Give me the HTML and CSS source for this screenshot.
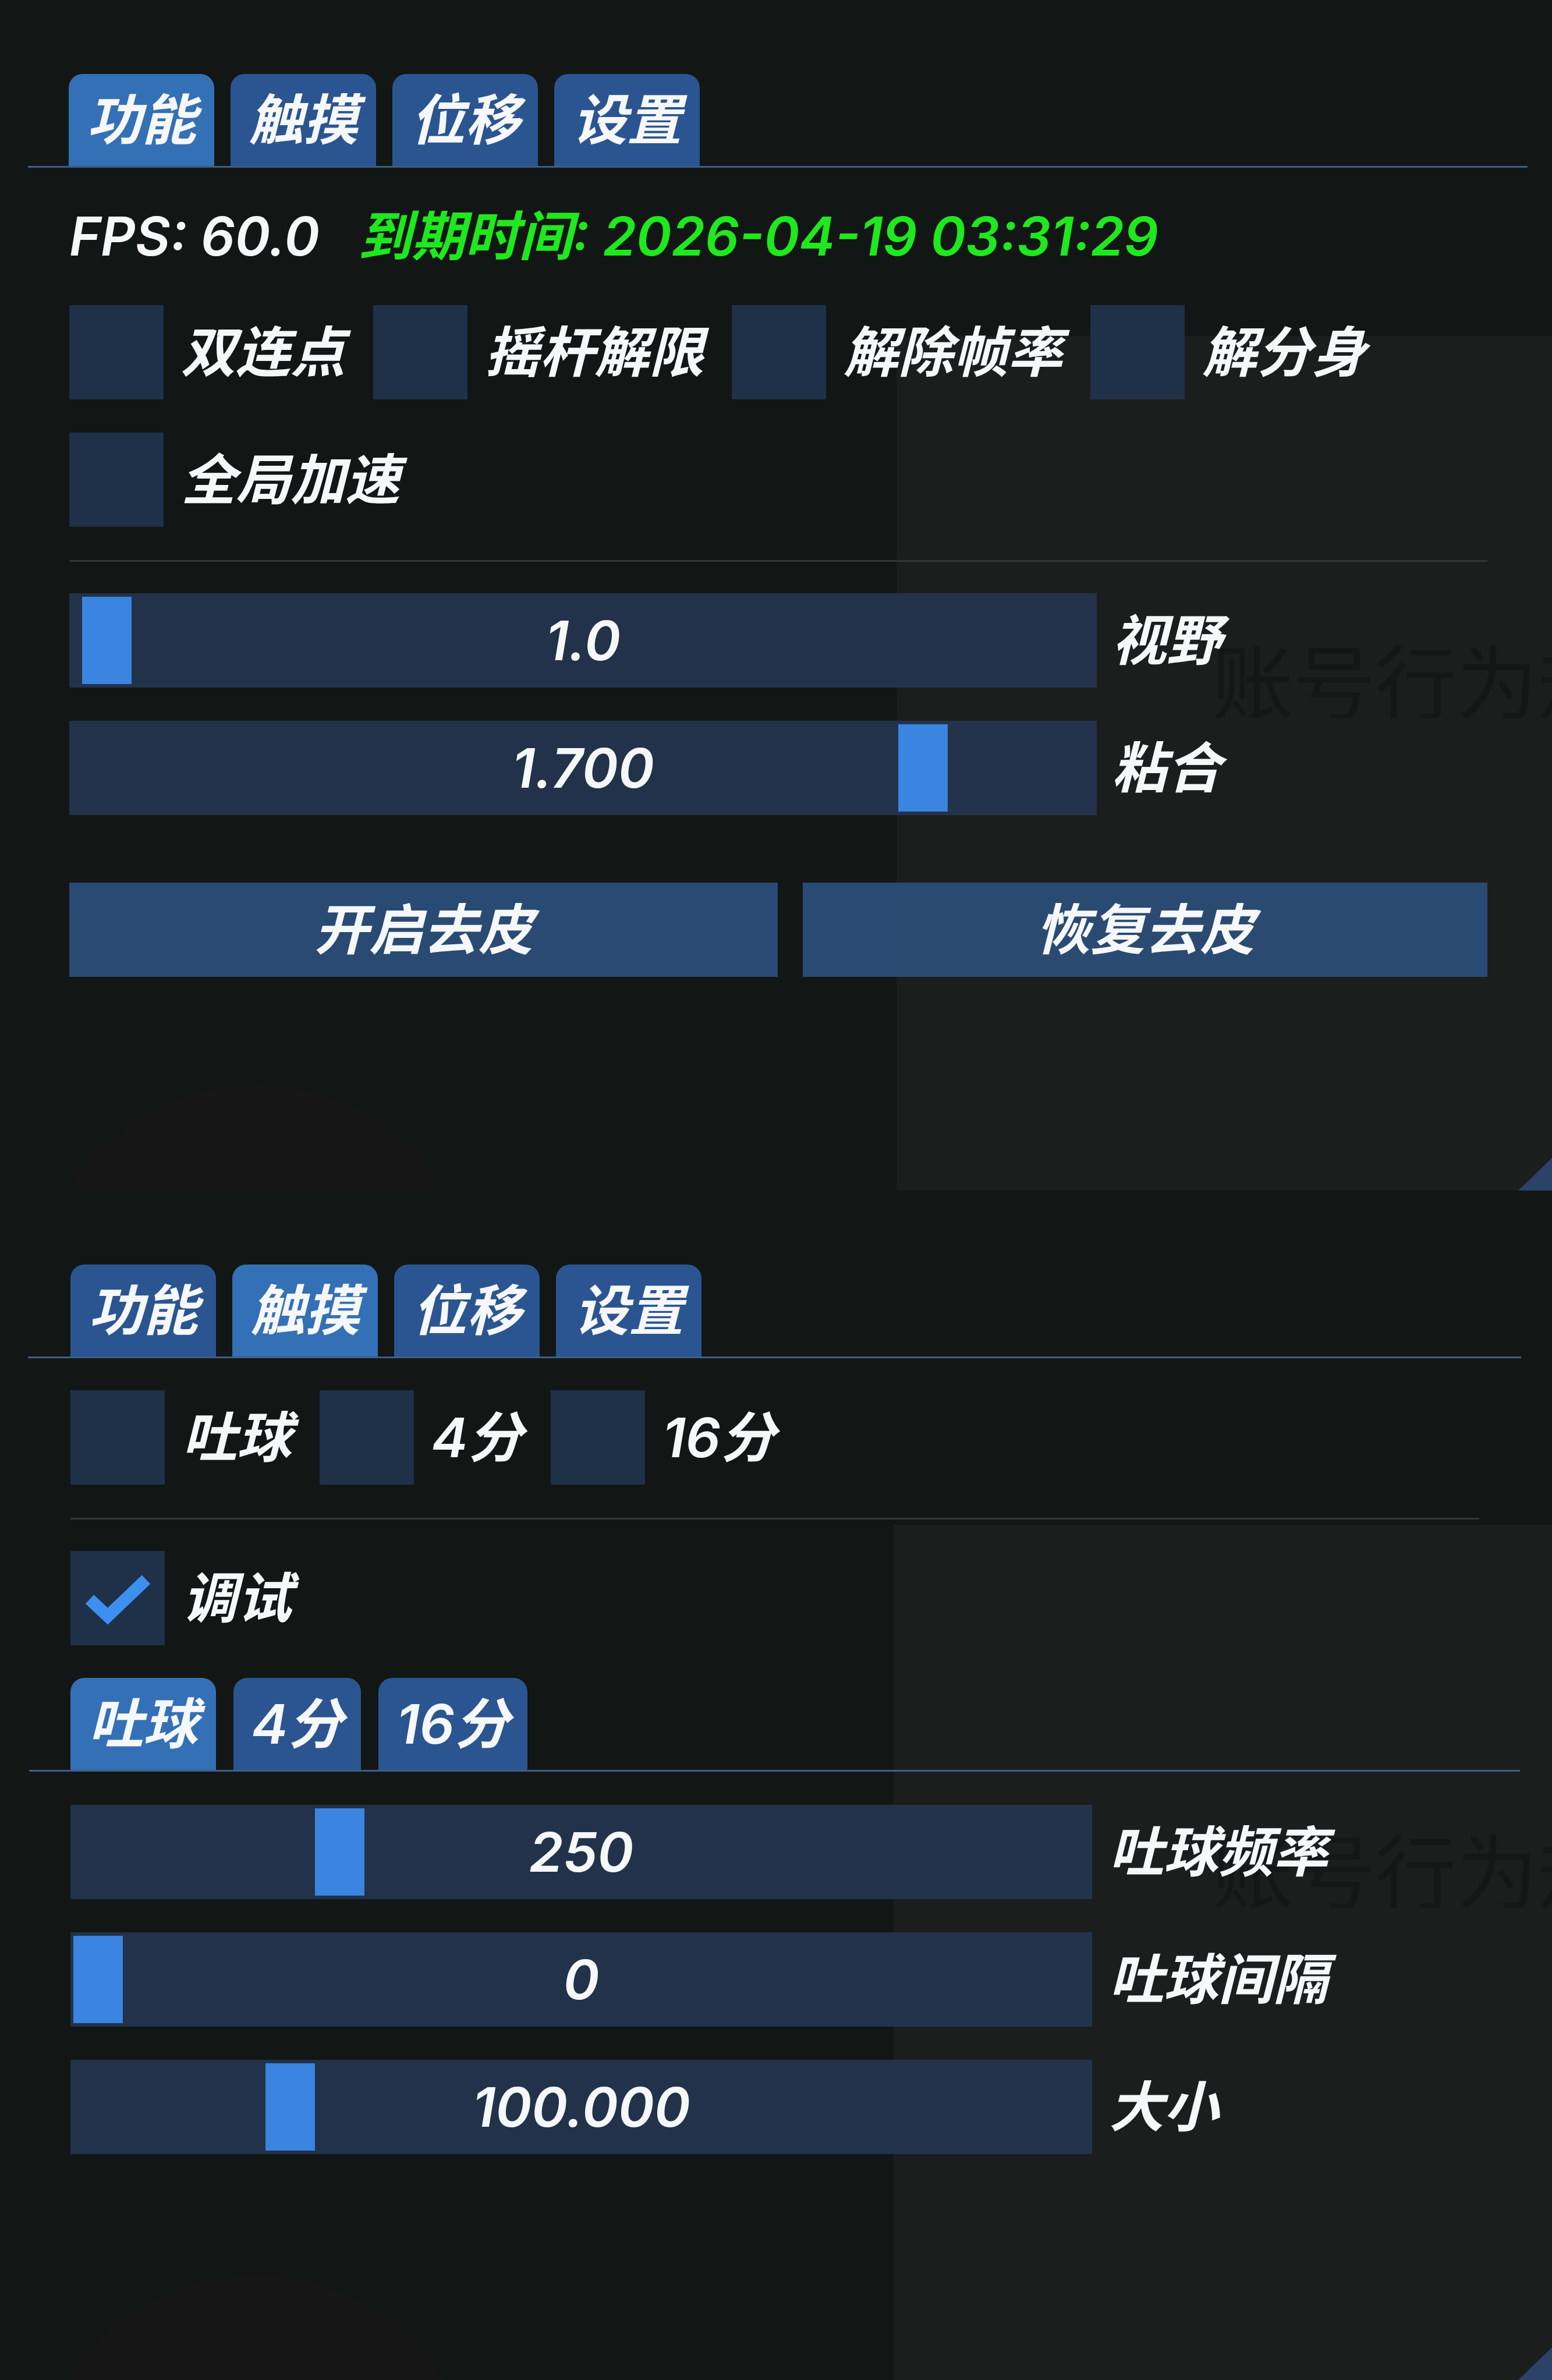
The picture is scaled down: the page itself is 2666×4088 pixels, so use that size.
FILE: index.html
```html
<!DOCTYPE html>
<html lang="zh-CN">
<head>
<meta charset="utf-8">
<title>Menu</title>
<link rel="stylesheet" href="styles.css">
</head>
<body>

<section class="screen screen-a">
  <div class="bg-panel"></div>
  <div class="ghost">账号行为规范</div>
  <div class="bg-blob"></div>
  <div class="corner"></div>

  <div class="win">
    <div class="tabbar">
      <div class="tab active">功能</div>
      <div class="tab">触摸</div>
      <div class="tab">位移</div>
      <div class="tab">设置</div>
    </div>
    <div class="body">
      <div class="fps-row">
        <span class="fps">FPS: 60.0</span>
        <span class="expire">到期时间: 2026-04-19 03:31:29</span>
      </div>
      <div class="check-row">
        <div class="check"><span class="box"></span><span class="lbl">双连点</span></div>
        <div class="check"><span class="box"></span><span class="lbl">摇杆解限</span></div>
        <div class="check"><span class="box"></span><span class="lbl">解除帧率</span></div>
        <div class="check"><span class="box"></span><span class="lbl">解分身</span></div>
      </div>
      <div class="check-row">
        <div class="check"><span class="box"></span><span class="lbl">全局加速</span></div>
      </div>
      <div class="sep"></div>
      <div class="slider-row">
        <div class="slider"><div class="grab" style="left:22px"></div><span class="val">1.0</span></div>
        <span class="lbl">视野</span>
      </div>
      <div class="slider-row">
        <div class="slider"><div class="grab" style="left:1424px"></div><span class="val">1.700</span></div>
        <span class="lbl">粘合</span>
      </div>
      <div class="btn-row">
        <div class="btn btn-a">开启去皮</div>
        <div class="btn btn-b">恢复去皮</div>
      </div>
    </div>
  </div>
</section>

<section class="screen screen-b">
  <div class="bg-panel"></div>
  <div class="ghost">账号行为规范</div>
  <div class="bg-blob"></div>
  <div class="corner"></div>

  <div class="win">
    <div class="tabbar">
      <div class="tab">功能</div>
      <div class="tab active">触摸</div>
      <div class="tab">位移</div>
      <div class="tab">设置</div>
    </div>
    <div class="body">
      <div class="check-row">
        <div class="check"><span class="box"></span><span class="lbl">吐球</span></div>
        <div class="check"><span class="box"></span><span class="lbl">4分</span></div>
        <div class="check"><span class="box"></span><span class="lbl">16分</span></div>
      </div>
      <div class="sep"></div>
      <div class="check-row">
        <div class="check">
          <span class="box">
            <svg class="tick" viewBox="0 0 162 162" width="162" height="162"><polyline points="33,83 64,112 130,49" fill="none" stroke="#3d8ff0" stroke-width="21" stroke-linejoin="miter"/></svg>
          </span>
          <span class="lbl">调试</span>
        </div>
      </div>
      <div class="tabbar subtabbar">
        <div class="tab active">吐球</div>
        <div class="tab">4分</div>
        <div class="tab">16分</div>
      </div>
      <div class="slider-row">
        <div class="slider"><div class="grab" style="left:420px"></div><span class="val">250</span></div>
        <span class="lbl">吐球频率</span>
      </div>
      <div class="slider-row">
        <div class="slider"><div class="grab" style="left:5px"></div><span class="val">0</span></div>
        <span class="lbl">吐球间隔</span>
      </div>
      <div class="slider-row">
        <div class="slider"><div class="grab" style="left:335px"></div><span class="val">100.000</span></div>
        <span class="lbl">大小</span>
      </div>
    </div>
  </div>
</section>

</body>
</html>
```

FILE: styles.css
```css
* { box-sizing: border-box; }

html, body {
  margin: 0;
  padding: 0;
  background: #121614;
}

body {
  width: 2666px;
  font-family: Inter, "Noto Sans CJK SC", sans-serif;
  font-style: italic;
  font-weight: 600;
  font-size: 94px;
  line-height: 1;
  color: #f5f7f9;
}

.screen {
  position: relative;
  overflow: hidden;
  background: #121614;
}
.screen-a { height: 2045px; }
.screen-b { height: 2043px; }

/* background decorations */
.bg-panel {
  position: absolute;
  left: 1540px;
  top: 577px;
  right: 0;
  bottom: 0;
  background: #1c1d1d;
}
.screen-b .bg-panel { top: 574px; left: 1535px; }

.ghost {
  position: absolute;
  left: 2082px;
  top: 1094px;
  width: 584px;
  overflow: hidden;
  font-family: "Noto Sans CJK SC", sans-serif;
  font-style: normal;
  font-weight: 400;
  font-size: 140px;
  line-height: 1;
  color: #151717;
  white-space: nowrap;
}
.screen-b .ghost { top: 1092px; }

.bg-blob {
  position: absolute;
  left: 60px;
  top: 1864px;
  width: 760px;
  height: 760px;
  border-radius: 50%;
  background: #171616;
}

.corner {
  position: absolute;
  right: 0;
  bottom: 0;
  width: 58px;
  height: 56px;
  background: #2b4366;
  clip-path: polygon(100% 0, 100% 100%, 0 100%);
}

/* window */
.win {
  position: relative;
  z-index: 1;
  padding-top: 127px;
}

.tabbar {
  display: flex;
  align-items: flex-end;
  gap: 28px;
  height: 161px;
  margin-left: 48px;
  margin-right: 42px;
  padding-left: 70px;
  border-bottom: 3px solid #3d5e86;
}
.screen-b .tabbar { margin-right: 53px; padding-left: 73px; }

.tab {
  height: 158px;
  padding: 0 31px;
  display: flex;
  align-items: center;
  justify-content: center;
  background: #2b5590;
  border-radius: 24px 24px 0 0;
  white-space: nowrap;
}
.tab.active { background: #3470b6; }

.body {
  display: flex;
  flex-direction: column;
  gap: 57px;
  padding: 57px 111px 0 119px;
}
.screen-b .body { padding: 55px 125px 0 121px; }

.screen-b .subtabbar {
  margin: 0 -70px 0 -71px;
  padding-left: 71px;
  height: 160px;
  gap: 30px;
}

.fps-row {
  height: 122px;
  display: flex;
  align-items: center;
  white-space: nowrap;
  font-size: 92px;
}
.fps {
  display: inline-block;
  width: 496px;
}
.expire { color: #1fe81f; }

.check-row {
  display: flex;
  align-items: center;
  gap: 48px;
}
.check {
  display: flex;
  align-items: center;
  gap: 30px;
}
.box {
  width: 162px;
  height: 162px;
  background: #1f3049;
  display: block;
}
.tick { display: block; }
.lbl { white-space: nowrap; }

.sep {
  height: 3px;
  background: #33373b;
  margin-bottom: -3px;
}

.slider-row {
  display: flex;
  align-items: center;
  gap: 26px;
}
.screen-b .slider-row { gap: 29px; }

.slider {
  position: relative;
  width: 1765px;
  height: 162px;
  background: rgba(36, 55, 84, 0.86);
  display: flex;
  align-items: center;
  justify-content: center;
}
.screen-b .slider { width: 1755px; }

.grab {
  position: absolute;
  top: 6px;
  bottom: 6px;
  width: 85px;
  background: #3b84e0;
}
.val { position: relative; }

.btn-row {
  display: flex;
  gap: 43px;
  margin-top: 59px;
}
.btn {
  height: 162px;
  display: flex;
  align-items: center;
  justify-content: center;
  background: rgba(44, 80, 124, 0.9);
  white-space: nowrap;
}
.btn-a { width: 1217px; }
.btn-b { flex: 1; }
```
